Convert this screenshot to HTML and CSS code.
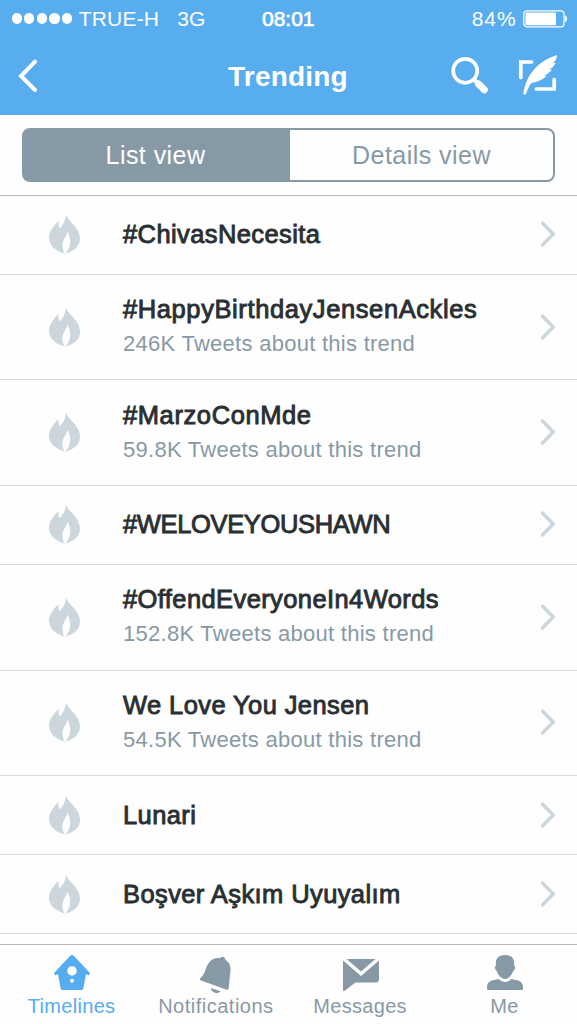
FILE: index.html
```html
<!DOCTYPE html>
<html lang="en">
<head>
    <meta charset="utf-8">
    <title>Trending</title>
    <link rel="stylesheet" href="styles.css">
</head>
<body>
    <!-- shared icons -->
    <svg class="symbols">
        <symbol id="flame" viewBox="0 0 32 40">
            <path d="M17.3 0C18.5 7 31.5 13 31.5 24.5C31.5 32 26 37 17 39.5C22.500 33 23.500 25 18.700 17.500C18.500 23 14 25 14 31C14 34.500 14.700 37.500 16 39.500C6 36.500.5 31 .5 23.500C.5 17.500 5 12.500 9.800 7C9.800 10 10 12.500 11.300 14.500C13.500 11 17.500 8 17.300 0Z"/>
        </symbol>
        <symbol id="chevron" viewBox="0 0 16 28">
            <path d="M2.500 3L13.200 14L2.500 25"/>
        </symbol>
    </svg>

    <header class="header">
        <div class="status">
            <div class="carrier">
                <div class="signal"><i></i><i></i><i></i><i></i><i></i></div>
                <span>TRUE-H</span>
                <span class="network">3G</span>
            </div>
            <span class="clock">08:01</span>
            <div class="power">
                <span>84%</span>
                <svg width="45" height="18" viewBox="0 0 45 18">
                    <rect x=".8" y=".8" width="40.200" height="16" rx="3" fill="none" stroke="#fff" stroke-width="1.200"/>
                    <rect x="2.500" y="2.500" width="30.500" height="12.700" rx="1" fill="#fff"/>
                    <path d="M42 5.500C44.700 6.500 44.700 11.300 42 12.300Z" fill="#fff"/>
                </svg>
            </div>
        </div>
        <nav class="nav">
            <div class="back">
                <svg width="20" height="34" viewBox="0 0 20 34"><path d="M17 2.700L3 17L17 31" fill="none" stroke="#fff" stroke-width="4" stroke-linecap="round"/></svg>
            </div>
            <h1>Trending</h1>
            <div class="actions">
                <svg width="38" height="38" viewBox="0 0 38 38">
                    <circle cx="14.200" cy="14.800" r="12" fill="none" stroke="#fff" stroke-width="3.700"/>
                    <path d="M22.500 23L26 26.500" stroke="#fff" stroke-width="4"/>
                    <path d="M27.500 28L33.300 33.800" stroke="#fff" stroke-width="7" stroke-linecap="round"/>
                </svg>
                <svg width="39" height="42" viewBox="0 0 39 42">
                    <path d="M2.800 23.500V8H13.500M18.500 35H36.200V25.500" fill="none" stroke="#fff" stroke-width="3.700" stroke-linecap="round"/>
                    <path d="M5.500 38.500C7 30 10 22.500 16 15.500C22 8.500 30 4 39 1C39 4.500 37.500 7.500 34.500 9L37.700 8.700C36 12.500 33.500 14.500 30.500 15.500L34 15.300C31.500 19 29 20.500 26 21.500H29C25 25.500 20 27.800 13.500 29C11 32 9.500 35.500 8.200 39.500C7.400 41.500 5 41 5.500 38.500Z" fill="#fff"/>
                </svg>
            </div>
        </nav>
    </header>

    <div class="switcher">
        <div class="segmented">
            <div class="segment active">List view</div>
            <div class="segment">Details view</div>
        </div>
    </div>

    <main class="trends">
        <div class="trend">
            <svg class="flame"><use href="#flame"/></svg>
            <div class="text"><h2>#ChivasNecesita</h2></div>
            <svg class="chevron"><use href="#chevron"/></svg>
        </div>
        <div class="trend tall">
            <svg class="flame"><use href="#flame"/></svg>
            <div class="text">
                <h2 class="loose">#HappyBirthdayJensenAckles</h2>
                <p>246K Tweets about this trend</p>
            </div>
            <svg class="chevron"><use href="#chevron"/></svg>
        </div>
        <div class="trend tall">
            <svg class="flame"><use href="#flame"/></svg>
            <div class="text">
                <h2 class="loose">#MarzoConMde</h2>
                <p>59.8K Tweets about this trend</p>
            </div>
            <svg class="chevron"><use href="#chevron"/></svg>
        </div>
        <div class="trend">
            <svg class="flame"><use href="#flame"/></svg>
            <div class="text"><h2 class="caps">#WELOVEYOUSHAWN</h2></div>
            <svg class="chevron"><use href="#chevron"/></svg>
        </div>
        <div class="trend tall">
            <svg class="flame"><use href="#flame"/></svg>
            <div class="text">
                <h2>#OffendEveryoneIn4Words</h2>
                <p>152.8K Tweets about this trend</p>
            </div>
            <svg class="chevron"><use href="#chevron"/></svg>
        </div>
        <div class="trend tall">
            <svg class="flame"><use href="#flame"/></svg>
            <div class="text">
                <h2>We Love You Jensen</h2>
                <p>54.5K Tweets about this trend</p>
            </div>
            <svg class="chevron"><use href="#chevron"/></svg>
        </div>
        <div class="trend">
            <svg class="flame"><use href="#flame"/></svg>
            <div class="text"><h2>Lunari</h2></div>
            <svg class="chevron"><use href="#chevron"/></svg>
        </div>
        <div class="trend">
            <svg class="flame"><use href="#flame"/></svg>
            <div class="text"><h2>Boşver Aşkım Uyuyalım</h2></div>
            <svg class="chevron"><use href="#chevron"/></svg>
        </div>
    </main>

    <footer class="tabbar">
        <div class="tab active">
            <svg width="38" height="38" viewBox="0 0 38 38">
                <path fill-rule="evenodd" d="M19 0Q20 0 21 1L36.500 17.500Q37.500 19 36 20Q35 20.500 34 19.700L33 19L30.300 33.500Q30 35 28.500 35H9.500Q8 35 7.700 33.500L5 19L4 19.700Q3 20.500 2 20Q.5 19 1.500 17.500L17 1Q18 0 19 0ZM19 11.200A4.700 4.700 0 1 0 19 20.600A4.700 4.700 0 1 0 19 11.200ZM19 23.800A2 2 0 1 0 19 27.800A2 2 0 1 0 19 23.800Z"/>
            </svg>
            <span>Timelines</span>
        </div>
        <div class="tab wide">
            <svg width="38" height="38" viewBox="0 0 38 38">
                <path d="M23.500 3.300C24 .8 28.500 1.500 28.300 4.700C33 7.500 34.200 12 33.300 18C32.300 24 32.500 28 31.700 33C31.500 34.500 30.500 35 29 34.500L4 25.500C2.500 25 2.500 23.500 4 22.500C9 18.500 8 11 13.500 6C16.500 3.300 20 2.700 23.500 3.300Z"/>
                <path d="M14 33L23.500 36.300C21.500 39.500 14.500 38 14 33Z"/>
            </svg>
            <span>Notifications</span>
        </div>
        <div class="tab">
            <svg width="38" height="38" viewBox="0 0 38 38">
                <path d="M4.500 4H33.500L19 16.500Z"/>
                <path d="M1 5.500L19 21L37 5.500V24Q37 27.500 33.500 27.500H13.500L3 35.500Q1 37 1 34.500Z"/>
            </svg>
            <span>Messages</span>
        </div>
        <div class="tab">
            <svg width="38" height="38" viewBox="0 0 38 38">
                <path d="M19 0C26 0 29 4 28 11C30 11 29 15 27.500 15.500C26 20 22.500 24 19 24C15.500 24 12 20 10.500 15.500C9 15 8 11 10 11C9 4 12 0 19 0Z"/>
                <path d="M12.500 24C16.500 28 21.500 28 25.500 24C31 25.500 37 25 37 32.500V33.500Q37 35 35.500 35H2.500Q1 35 1 33.500V32.500C1 25 7 25.500 12.500 24Z"/>
            </svg>
            <span>Me</span>
        </div>
    </footer>
</body>
</html>
```

FILE: styles.css
```css
* {
  box-sizing: border-box;
}

body {
  margin: 0;
  width: 577px;
  height: 1024px;
  display: flex;
  flex-direction: column;
  overflow: hidden;
  background-color: #fefefe;
  color: #292f33;
  font-family: "Liberation Sans", Arial, sans-serif;
}

h1, h2, p {
  margin: 0;
}

svg {
  display: block;
  flex: none;
}

.symbols {
  display: none;
}

.header {
  flex: none;
  height: 115px;
  background-color: #58adee;
  color: #fff;
}

.status {
  display: grid;
  grid-template-columns: 1fr auto 1fr;
  align-items: center;
  height: 37px;
  padding: 0 9px 0 11.5px;
  font-size: 21px;
}

.carrier, .power {
  display: flex;
  align-items: center;
}

.carrier {
  letter-spacing: 0.2px;
}

.signal {
  display: flex;
  gap: 2.3px;
  margin-right: 6.5px;
}

.signal i {
  width: 10.3px;
  height: 10.3px;
  border-radius: 50%;
  background-color: #fff;
}

.network {
  margin-left: 18px;
}

.clock {
  margin-right: 3px;
  -webkit-text-stroke: 0.7px #fff;
}

.power {
  justify-content: flex-end;
  gap: 6.5px;
  letter-spacing: 0.9px;
}

.nav {
  display: grid;
  grid-template-columns: 1fr auto 1fr;
  align-items: center;
  height: 78px;
  padding: 1px 19px 0 18px;
}

.nav h1 {
  font-size: 28px;
  line-height: 34px;
  letter-spacing: 0.2px;
}

.back {
  padding-bottom: 2px;
}

.actions {
  display: flex;
  justify-content: flex-end;
  align-items: center;
  gap: 29px;
  margin-right: 1px;
  padding-bottom: 4px;
}

.switcher {
  flex: none;
  height: 80.7px;
  padding: 13px 22px 0;
  border-bottom: 1px solid #b4b8bc;
}

.segmented {
  display: flex;
  height: 54px;
  border: 2px solid #8899a6;
  border-radius: 8px;
  background-color: #8899a6;
}

.segment {
  flex: 1;
  border-radius: 0 6px 6px 0;
  background-color: #fefefe;
  font-size: 25px;
  line-height: 51px;
  letter-spacing: 0.45px;
  text-align: center;
  color: #8899a6;
}

.segment.active {
  flex: 0 0 266px;
  padding-right: 3px;
  border-radius: 0;
  background-color: #8899a6;
  color: #fff;
}

.trends {
  flex: 1;
}

.trend {
  display: flex;
  align-items: center;
  height: 79.2px;
  padding: 0 21px 0 48px;
  border-bottom: 1px solid #d3d9dd;
}

.trend.tall {
  height: 105.5px;
}

.flame {
  width: 33px;
  height: 40px;
  margin-bottom: 1px;
  fill: #ccd6dd;
}

.text {
  flex: 1;
  padding-left: 42px;
  padding-bottom: 1px;
  line-height: 34px;
  white-space: nowrap;
}

.text h2 {
  font-size: 25.5px;
  font-weight: normal;
  letter-spacing: 0.4px;
  -webkit-text-stroke: 0.9px #292f33;
}

.text h2.loose {
  letter-spacing: 0.6px;
}

.text h2.caps {
  letter-spacing: -0.35px;
}

.text p {
  padding-top: 1px;
  font-size: 22px;
  letter-spacing: 0.27px;
  color: #8899a6;
}

.chevron {
  width: 16px;
  height: 28px;
  margin-bottom: 1px;
  fill: none;
  stroke: #ccd6dd;
  stroke-width: 3.5px;
  stroke-linecap: round;
}

.tabbar {
  flex: none;
  display: flex;
  height: 80px;
  border-top: 1px solid #b8b8b8;
}

.tab {
  flex: 1 1 0;
  display: flex;
  flex-direction: column;
  align-items: center;
  padding-top: 10px;
  font-size: 20px;
  line-height: 26px;
  letter-spacing: 0.3px;
  color: #8899a6;
  fill: #8899a6;
}

.tab span {
  margin-left: -1px;
}

.tab.wide {
  letter-spacing: 0.5px;
}

.tab.active {
  color: #55acee;
  fill: #55acee;
}
```
